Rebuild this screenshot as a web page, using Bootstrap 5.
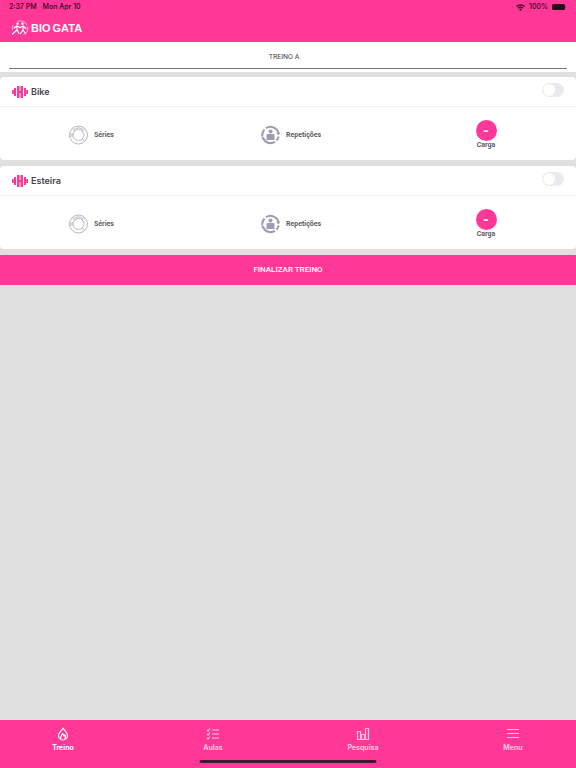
<!DOCTYPE html>
<html lang="pt-BR">
<head>
<meta charset="utf-8">
<meta name="viewport" content="width=device-width, initial-scale=1">
<title>Bio Gata - Treino</title>
<link href="https://cdn.jsdelivr.net/npm/bootstrap@5.3.0/dist/css/bootstrap.min.css" rel="stylesheet">
<style>
:root { --brand: #ff3897; }
body { font-family: Inter, "Liberation Sans", sans-serif; background: #e0e0e0; color: #43434b; font-size: 7px; line-height: 10px; }
.brand-bg { background: var(--brand); }
.brand-fg { color: var(--brand); }
.status-line { height: 14px; padding: 0 9px; color: #2b0a1a; font-weight: 500; }
.status-time { gap: 6px; }
.brand-line { height: 28px; padding: 0 11px; font-family: "Liberation Sans", sans-serif; font-size: 11px; font-weight: 700; line-height: 28px; gap: 2px; }
.plan-bar { height: 30px; padding: 0 9px; }
.plan-name { height: 27px; padding: 3px 8px 0 0; border-bottom: 1px solid #77777c; font-family: Roboto, sans-serif; }
.exercise { border: 0; border-radius: 4px; }
.exercise-head { height: 30px; padding: 0 12px; border-bottom: 1px solid #efeff1; }
.exercise-mark { margin-right: 3px; }
.exercise-title { font-size: 9px; line-height: 12px; font-weight: 600; }
.exercise-body { height: 53px; padding-top: 2px; font-family: Roboto, sans-serif; font-size: 7px; line-height: 8px; font-weight: 700; color: #5c5c63; }
.metric { gap: 5px; padding-left: 68px; }
.load { padding-left: 12px; padding-right: 0; }
.load-btn { width: 21px; height: 21px; font-size: 14px; line-height: 20px; font-weight: 700; }
.form-check-input.switch-sm { width: 22px; height: 14px; margin: 0 0 4px; background-color: #e8eaed; border: 1px solid #e8eaed; background-image: url("data:image/svg+xml,%3Csvg xmlns='http://www.w3.org/2000/svg' viewBox='-4 -4 8 8'%3E%3Ccircle r='4' fill='white'/%3E%3C/svg%3E"); }
.form-check-input.switch-sm:checked { background-color: #ff3897; }
.finish { height: 30px; font-size: 8px; font-weight: 500; font-family: Roboto, sans-serif; }
.stack { gap: 6px; padding-top: 5px; }
.tabs { height: 48px; gap: 24px; padding-top: 7px; }
.tab-link { color: #ffc3df; font-weight: 700; gap: 2px; }
.tab-link.active { color: #fff; }
.home-line { width: 177px; height: 3px; bottom: 5px; background: #43192f; }
</style>
<script src="https://cdn.jsdelivr.net/npm/bootstrap@5.3.0/dist/js/bootstrap.bundle.min.js" defer></script>
</head>
<body class="d-flex flex-column min-vh-100">
<svg class="d-none" xmlns="http://www.w3.org/2000/svg">
  <symbol id="dumbbell" viewBox="0 0 16 14"><path fill="currentColor" d="M0 5h1.800v4H0zM2 3h2v8H2zM5 1h2.500v12H5zM7 6h2v2H7zM8.500 1H11v12H8.500zM12 3h2v8h-2zM14.200 5H16v4h-1.800z"/></symbol>
  <symbol id="plate" viewBox="0 0 20 20"><g fill="none" stroke="#b0b0b8" stroke-width=".9"><circle cx="10" cy="10" r="9"/><circle cx="10" cy="10" r="5.500"/><path d="M3.800 3.600l2.500 2.500M16.200 3.600l-2.500 2.500M16.200 16.400l-2.500-2.500M1 9h3.500M1 11h3.500M5.500 4.500a7 7 0 0 1 9 0"/></g></symbol>
  <symbol id="repeat" viewBox="0 0 20 20"><g fill="none" stroke="#9c9db0" stroke-width="2"><path d="M1.900 11.500A8.200 8.200 0 0 1 4 4.500M5.500 3.200A8.200 8.200 0 0 1 18.100 9M18.100 11.500A8.200 8.200 0 0 1 16 15.500M14.500 16.800A8.200 8.200 0 0 1 2.500 13"/></g><path fill="#9c9db0" d="M19.600 7.500l-1.500 3-2.500-2.500zM.5 13.500l1.500-2 2.500 2zM6 10q0-1 1-1h6q1 0 1 1v5H6z"/><circle cx="10" cy="6.500" r="2" fill="#9c9db0"/></symbol>
</svg>

<header class="brand-bg text-white">
  <div class="status-line d-flex align-items-center justify-content-between">
    <div class="status-time d-flex"><span>2:37 PM</span><span>Mon Apr 10</span></div>
    <div class="d-flex align-items-center gap-1">
      <svg width="9" height="7" viewBox="0 0 9 7" fill="none" stroke="currentColor" stroke-width="1.200" aria-hidden="true"><path d="M.5 2.500a5.800 5.800 0 0 1 8 0M2 4.200a3.700 3.700 0 0 1 5 0"/><circle cx="4.500" cy="5.700" r=".5" fill="currentColor"/></svg>
      <span>100%</span>
      <svg width="15" height="6" viewBox="0 0 15 6" fill="currentColor" aria-hidden="true"><rect width="13" height="6" rx="1.500"/><path d="M13.600 2q1 1 0 2z"/></svg>
    </div>
  </div>
  <div class="brand-line d-flex align-items-center">
    <svg width="18" height="16" viewBox="0 0 18 16" fill="none" stroke="currentColor" stroke-linecap="round" aria-hidden="true"><path stroke-width=".6" d="M7 1.200A7 7 0 0 1 16 5M16.800 7a7 7 0 0 1-4 7.500M2 5a7 7 0 0 0-.5 5"/><circle cx="6.500" cy="3.800" r="1.200" fill="currentColor" stroke="none"/><circle cx="11.500" cy="3.800" r="1.200" fill="currentColor" stroke="none"/><path stroke-width="1.200" d="M3 8l3-2 3 1.500L12 6l3 2.500M6 6v4l-4.500 4M6 10l2 3.500M12 6v4l-2.500 3.500M12 10l2.500 3.500"/></svg>
    <span>BIO</span><span>GATA</span>
  </div>
</header>

<section class="plan-bar bg-white">
  <div class="plan-name d-flex align-items-center justify-content-center">TREINO A</div>
</section>

<main class="stack d-flex flex-column flex-grow-1">
  <article class="exercise card">
    <div class="exercise-head d-flex align-items-center">
      <svg class="brand-fg exercise-mark" width="16" height="14" aria-hidden="true"><use href="#dumbbell"/></svg>
      <label class="exercise-title flex-grow-1" for="bike">Bike</label>
      <div class="form-switch p-0 d-flex"><input class="form-check-input switch-sm" type="checkbox" role="switch" id="bike"></div>
    </div>
    <div class="exercise-body row g-0 align-items-center">
      <div class="metric col-4 d-flex align-items-center"><svg width="21" height="20" aria-hidden="true"><use href="#plate"/></svg><span>Séries</span></div>
      <div class="metric col-4 d-flex align-items-center"><svg width="21" height="20" aria-hidden="true"><use href="#repeat"/></svg><span>Repetições</span></div>
      <div class="load col-4 d-flex flex-column align-items-center"><button type="button" class="load-btn brand-bg text-white border-0 rounded-circle p-0" aria-label="Carga Bike">-</button><span>Carga</span></div>
    </div>
  </article>
  <article class="exercise card">
    <div class="exercise-head d-flex align-items-center">
      <svg class="brand-fg exercise-mark" width="16" height="14" aria-hidden="true"><use href="#dumbbell"/></svg>
      <label class="exercise-title flex-grow-1" for="esteira">Esteira</label>
      <div class="form-switch p-0 d-flex"><input class="form-check-input switch-sm" type="checkbox" role="switch" id="esteira"></div>
    </div>
    <div class="exercise-body row g-0 align-items-center">
      <div class="metric col-4 d-flex align-items-center"><svg width="21" height="20" aria-hidden="true"><use href="#plate"/></svg><span>Séries</span></div>
      <div class="metric col-4 d-flex align-items-center"><svg width="21" height="20" aria-hidden="true"><use href="#repeat"/></svg><span>Repetições</span></div>
      <div class="load col-4 d-flex flex-column align-items-center"><button type="button" class="load-btn brand-bg text-white border-0 rounded-circle p-0" aria-label="Carga Esteira">-</button><span>Carga</span></div>
    </div>
  </article>
  <button type="button" class="finish brand-bg text-white border-0 w-100">FINALIZAR TREINO</button>
</main>

<nav class="tabs brand-bg d-flex sticky-bottom" aria-label="Principal">
  <a href="#treino" class="tab-link active d-flex flex-column align-items-center flex-fill w-100 text-decoration-none" aria-current="page">
    <svg width="14" height="14" viewBox="0 0 14 14" fill="none" stroke="currentColor" stroke-width="1.200" stroke-linejoin="round" aria-hidden="true"><path d="M7 1C6.500 3.500 2.500 5 2.500 8.500a4.500 4.500 0 0 0 9 0C11.500 5 8 3.500 7 1z"/><path d="M5 12c-1.200-2 .5-3 1.500-5.500C8 7.500 7.500 9 8 9l1-1c1 2 .5 3.300-.5 4"/></svg>
    <span>Treino</span>
  </a>
  <a href="#aulas" class="tab-link d-flex flex-column align-items-center flex-fill w-100 text-decoration-none">
    <svg width="14" height="14" viewBox="0 0 14 14" fill="none" stroke="currentColor" stroke-width="1.200" aria-hidden="true"><path d="M1 3l1 1 2-2.500M1 7l1 1 2-2.500M1 11l1 1 2-2.500M6 3h7M6 7h7M6 11h7"/></svg>
    <span>Aulas</span>
  </a>
  <a href="#pesquisa" class="tab-link d-flex flex-column align-items-center flex-fill w-100 text-decoration-none">
    <svg width="14" height="14" viewBox="0 0 14 14" fill="none" stroke="currentColor" stroke-width="1.200" aria-hidden="true"><path d="M1.500 4.500h3v8h-3zM5.500 7.500h3v5h-3zM9.500 1.500h3v11h-3z"/></svg>
    <span>Pesquisa</span>
  </a>
  <a href="#menu" class="tab-link d-flex flex-column align-items-center flex-fill w-100 text-decoration-none">
    <svg width="14" height="14" viewBox="0 0 14 14" fill="none" stroke="currentColor" stroke-width="1.200" aria-hidden="true"><path d="M1 2.500h12M1 6.500h12M1 10.500h12"/></svg>
    <span>Menu</span>
  </a>
  <div class="home-line position-absolute start-50 translate-middle-x rounded-pill"></div>
</nav>
</body>
</html>
